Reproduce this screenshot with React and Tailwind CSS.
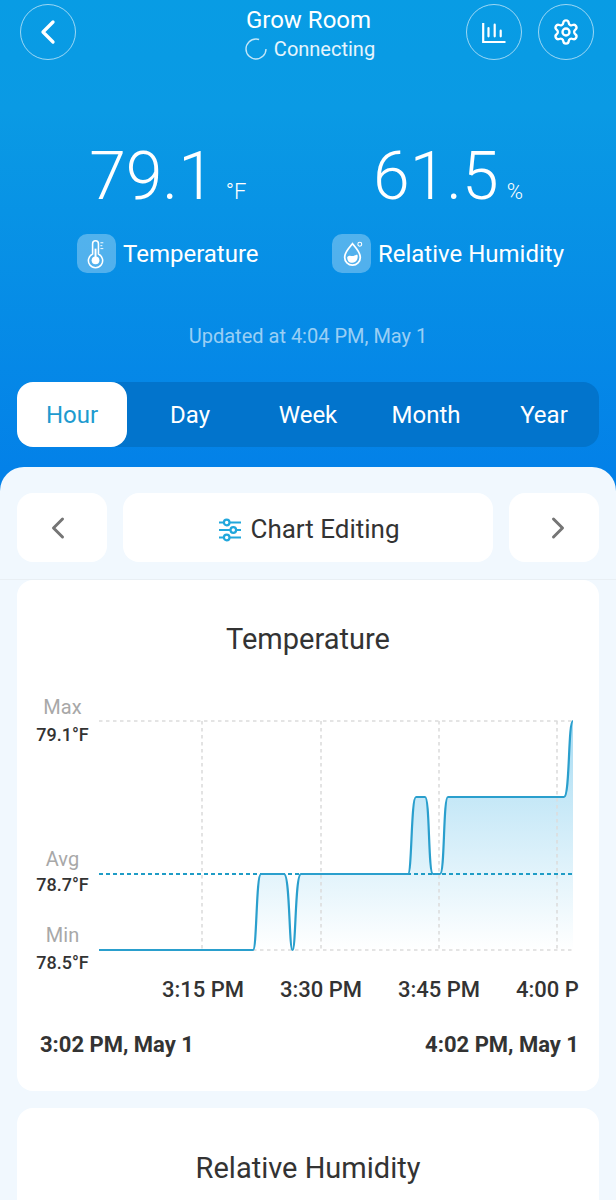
import { ChevronLeft, ChevronRight, Settings } from 'lucide-react';

const tabs = ['Hour', 'Day', 'Week', 'Month', 'Year'];

const axisLabels = ['3:15 PM', '3:30 PM', '3:45 PM', '4:00 PM'];

// curve points are in page coordinates, the svg viewBox lines up with them
const curve =
  'M99 950 L253 950 C257 950 256 874 261 874 L284 874 C290 874 289 950 292.5 950 C296 950 295 874 301 874 L408 874 C412 874 411 797 416 797 L425 797 C430 797 428 874 433 874 L440 874 C445 874 443 797 448 797 L564 797 C570 797 568 721 573 721';

function ChartLabel({ name, value, className, valueClass }) {
  return (
    <div className={`absolute left-0 w-[91px] flex flex-col items-center ${className}`}>
      <span className="text-[20px] leading-6 text-[#a8a8a8]">{name}</span>
      <span className={`text-[18px] leading-6 font-medium text-[#333333] ${valueClass}`}>{value}</span>
    </div>
  );
}

function TemperatureChart() {
  return (
    <div className="relative pl-[82px] pt-5 pb-[15px]">
      <ChartLabel name="Max" value="79.1°F" className="top-0" valueClass="mt-1" />
      <ChartLabel name="Avg" value="78.7°F" className="top-[152px]" valueClass="mt-0.5" />
      <ChartLabel name="Min" value="78.5°F" className="top-[228px]" valueClass="mt-1" />
      <svg width="480" height="245" viewBox="99 715 480 245" fill="none" className="block">
        <defs>
          <linearGradient id="area" x1="0" y1="721" x2="0" y2="950" gradientUnits="userSpaceOnUse">
            <stop offset="0" stopColor="#a8dcf3" />
            <stop offset="1" stopColor="#ffffff" />
          </linearGradient>
        </defs>
        <path d={`${curve} L573 950 L99 950 Z`} fill="url(#area)" />
        <g stroke="#dcdcdc" strokeWidth="1.6" strokeDasharray="3.5 3.5">
          <path d="M99 721H573" />
          <path d="M99 950H573" />
          <path d="M202 721V950" />
          <path d="M321 721V950" />
          <path d="M439 721V950" />
          <path d="M557 721V950" />
        </g>
        <path d="M99 874H573" stroke="#1f9cc6" strokeWidth="2" strokeDasharray="4 3" />
        <path d={curve} stroke="#2a9fcd" strokeWidth="2.2" />
      </svg>
    </div>
  );
}

export default function App() {
  return (
    <div className="h-[1200px] overflow-hidden bg-[linear-gradient(180deg,#089ce4_0,#0a9ae4_110px,#0381e8_470px)] font-['Roboto',sans-serif]">
      {/* header */}
      <div className="h-[467px]">
        <div className="grid grid-cols-[1fr_auto_1fr] pl-5 pr-[22px] pt-1 text-white">
          <button className="w-14 h-14 rounded-full border border-white/60 flex items-center justify-center">
            <ChevronLeft size={40} strokeWidth={2} />
          </button>
          <div className="flex flex-col items-center">
            <span className="text-[24px] leading-8 ml-[3px]">Grow Room</span>
            <div className="flex items-center gap-[7px] ml-[6px] mt-[1px]">
              <svg width="22" height="22" viewBox="0 0 22 22" fill="none">
                <circle cx="11" cy="11" r="10" stroke="#ffffff" strokeOpacity="0.75" strokeWidth="1.4" strokeDasharray="50 13" />
              </svg>
              <span className="text-[20px] leading-6 text-white/90">Connecting</span>
            </div>
          </div>
          <div className="flex justify-end gap-4">
            <button className="w-14 h-14 rounded-full border border-white/60 flex items-center justify-center">
              <svg width="24" height="22" viewBox="0 0 24 22" fill="none" stroke="#ffffff" className="mt-0.5">
                <path d="M1.200 1V20H23.500" strokeWidth="2.200" />
                <path d="M6.500 6V14.300M12.700 2.700V14.300M18.700 8.700V14.300" strokeWidth="2.200" strokeLinecap="round" />
              </svg>
            </button>
            <button className="w-14 h-14 rounded-full border border-white/60 flex items-center justify-center">
              <Settings size={28} strokeWidth={2} />
            </button>
          </div>
        </div>

        <div className="flex justify-between pl-[77px] pr-[52px] mt-[74px] text-white">
          <div className="flex flex-col items-center">
            <div className="flex items-baseline gap-[11px]">
              <span className="text-[66px] leading-[84px] font-light">79.1</span>
              <span className="text-[22px] font-light">°F</span>
            </div>
            <div className="flex items-center gap-[7px] mt-[15px]">
              <div className="w-[39px] h-[39px] rounded-[10px] bg-white/30 flex items-center justify-center">
                <svg width="39" height="39" viewBox="0 0 40 40" fill="none">
                  <path d="M16 10a3 3 0 0 1 6 0v10.600a7.300 7.300 0 1 1-6 0Z" stroke="#ffffff" strokeWidth="1.600" />
                  <circle cx="19" cy="27" r="4" fill="#ffffff" />
                  <path d="M19 15V25" stroke="#ffffff" strokeWidth="2" />
                  <path d="M24 9h3M24 12h2M24 15h3" stroke="#ffffff" strokeWidth="1" />
                </svg>
              </div>
              <span className="text-[24px] leading-8">Temperature</span>
            </div>
          </div>
          <div className="flex flex-col items-center">
            <div className="flex items-baseline gap-2">
              <span className="text-[66px] leading-[84px] font-light">61.5</span>
              <span className="text-[22px] font-light">%</span>
            </div>
            <div className="flex items-center gap-[7px] mt-[15px]">
              <div className="w-[39px] h-[39px] rounded-[10px] bg-white/30 flex items-center justify-center">
                <svg width="39" height="39" viewBox="0 0 40 40" fill="none">
                  <path d="M21 10C17 15 13 18.500 13 24a8 8 0 0 0 16 0C29 18.500 25 15 21 10Z" stroke="#ffffff" strokeWidth="1.800" />
                  <path d="M15.600 23.500C18 21 20 23 22 22.500S25 21 26.200 21.500C27 25 25 29.500 21 29.500S15.500 27 15.600 23.500Z" fill="#ffffff" />
                  <circle cx="28.500" cy="10.500" r="2" stroke="#ffffff" strokeWidth="1.100" />
                </svg>
              </div>
              <span className="text-[24px] leading-8">Relative Humidity</span>
            </div>
          </div>
        </div>

        <p className="text-center text-[20px] leading-7 mt-[49px] text-white/60">Updated at 4:04 PM, May 1</p>

        <div className="mx-[17px] mt-[32px] h-[65px] rounded-2xl bg-[#0274cc] grid grid-cols-5 gap-2">
          {tabs.map((tab, i) => (
            <div
              key={tab}
              className={`flex items-center justify-center text-[24px] rounded-2xl ${i === 0 ? 'bg-white text-[#1e9bcf]' : 'text-white'}`}
            >
              {tab}
            </div>
          ))}
        </div>
      </div>

      {/* panel */}
      <div className="h-[733px] rounded-t-[24px] bg-[#f1f8fe]">
        <div className="flex gap-4 px-[17px] pt-[26px] pb-[17px] border-b border-[#e9eff4]">
          <button className="w-[90px] h-[69px] rounded-2xl bg-white flex items-center justify-center pr-2 text-[#757575]">
            <ChevronLeft size={36} strokeWidth={2} />
          </button>
          <button className="flex-1 h-[69px] rounded-2xl bg-white flex items-center justify-center gap-[9px] pt-1 pl-[3px] text-[26px] text-[#333333]">
            <svg width="22" height="24" viewBox="0 0 22 24" fill="none" stroke="#22a7dc" strokeWidth="2.200">
              <path d="M0 4.500H5M10.500 4.500H22M0 12H11.500M17 12H22M0 19.500H5M10.500 19.500H22" />
              <circle cx="7.700" cy="4.500" r="2.800" />
              <circle cx="14.300" cy="12" r="2.800" />
              <circle cx="7.700" cy="19.500" r="2.800" />
            </svg>
            Chart Editing
          </button>
          <button className="w-[90px] h-[69px] rounded-2xl bg-white flex items-center justify-center pl-2 text-[#757575]">
            <ChevronRight size={36} strokeWidth={2} />
          </button>
        </div>

        <div className="flex flex-col gap-[17px] px-[17px]">
          <div className="h-[511px] rounded-2xl bg-white">
            <h2 className="pt-[39px] text-center text-[29px] leading-10 text-[#333333]">Temperature</h2>
            <div className="mt-9">
              <TemperatureChart />
            </div>
            <div className="flex gap-[36px] ml-[145px] mr-5 overflow-hidden">
              {axisLabels.map((label) => (
                <span key={label} className="shrink-0 w-[82px] whitespace-nowrap text-[22px] leading-[30px] font-medium text-[#333333]">
                  {label}
                </span>
              ))}
            </div>
            <div className="flex justify-between ml-[23px] mr-5 mt-[25px] text-[22px] leading-[30px] font-bold text-[#333333]">
              <span>3:02 PM, May 1</span>
              <span>4:02 PM, May 1</span>
            </div>
          </div>

          <div className="h-[120px] rounded-2xl bg-white">
            <h2 className="pt-10 text-center text-[29px] leading-10 text-[#333333]">Relative Humidity</h2>
          </div>
        </div>
      </div>
    </div>
  );
}
